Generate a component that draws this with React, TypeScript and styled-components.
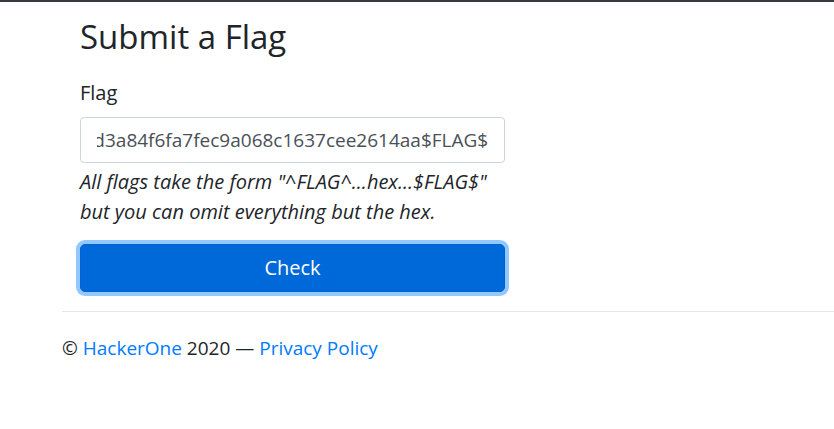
import React, { useLayoutEffect, useRef } from 'react'
import styled, { createGlobalStyle } from 'styled-components'

const GlobalStyle = createGlobalStyle`
  html, body {
    margin: 0;
    padding: 0;
    background: #fff;
  }
  body {
    font-family: 'Open Sans', 'Noto Sans', sans-serif;
    font-size: 20px;
    line-height: 1.5;
    color: #212529;
  }
  * {
    box-sizing: border-box;
  }
`

const TopBar = styled.div`
  height: 2px;
  background-color: #343a40;
`

const Main = styled.main`
  padding: 15px 0 0 80px;
`

const Title = styled.h2`
  margin: 0 0 21px;
  font-size: 33px;
  font-weight: 400;
  line-height: 1.2;
`

const Form = styled.form`
  width: 425px;
`

const FormGroup = styled.div`
  display: flex;
  flex-direction: column;
  margin-bottom: 17px;
`

const Label = styled.label`
  margin-bottom: 9px;
`

const Input = styled.input`
  height: 46px;
  padding: 0 16px;
  font: inherit;
  font-size: 19px;
  color: #495057;
  background: #fff;
  border: 1px solid #ced4da;
  border-radius: 4px;
  outline: none;
`

const HelpText = styled.small`
  display: block;
  margin-top: 4px;
  font-size: 20px;
  font-style: italic;
`

const Button = styled.button`
  display: block;
  width: 100%;
  height: 48px;
  font: inherit;
  color: #fff;
  background-color: #0069d9;
  border: 1px solid #0062cc;
  border-radius: 5px;
  box-shadow: 0 0 0 4px rgba(38, 143, 255, 0.5);
  cursor: pointer;
`

const Footer = styled.footer`
  padding-left: 62px;
  font-size: 19px;
`

const Rule = styled.hr`
  margin: 19px 0 22px;
  border: 0;
  border-top: 1px solid rgba(0, 0, 0, 0.1);
`

const Link = styled.a`
  color: #007bff;
  text-decoration: none;
`

const FLAG =
  '^FLAG^5c0e1f9b2d7a4c38e6b0f1d2a9c7e45ed3a84f6fa7fec9a068c1637cee2614aa$FLAG$'

export default function App() {
  const inputRef = useRef<HTMLInputElement>(null)

  // the field is scrolled to the end of the pasted flag
  useLayoutEffect(() => {
    const el = inputRef.current
    if (el) el.scrollLeft = el.scrollWidth
  }, [])

  return (
    <>
      <GlobalStyle />
      <TopBar />
      <Main>
        <Title>Submit a Flag</Title>
        <Form onSubmit={e => e.preventDefault()}>
          <FormGroup>
            <Label htmlFor="flag">Flag</Label>
            <Input id="flag" ref={inputRef} type="text" defaultValue={FLAG} />
            <HelpText>
              All flags take the form "^FLAG^...hex...$FLAG$" but you can omit everything but the hex.
            </HelpText>
          </FormGroup>
          <Button type="submit">Check</Button>
        </Form>
      </Main>
      <Footer>
        <Rule />
        © <Link href="#">HackerOne</Link> 2020 — <Link href="#">Privacy Policy</Link>
      </Footer>
    </>
  )
}
